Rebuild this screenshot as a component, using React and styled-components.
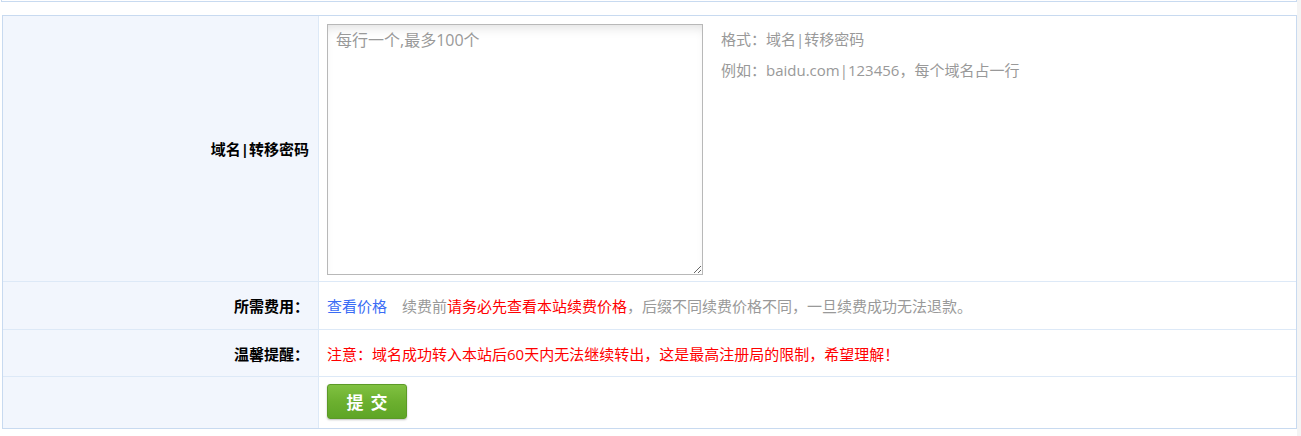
import React from 'react';
import styled, { createGlobalStyle } from 'styled-components';

const GlobalStyle = createGlobalStyle`
  html, body {
    margin: 0;
    padding: 0;
    background: #f4f4f4;
  }
  body {
    font-family: 'Open Sans', 'Noto Sans CJK SC', sans-serif;
  }
`;

const Page = styled.div`
  width: 1297px;
  height: 436px;
  background: #ffffff;
  overflow: hidden;
`;

const TopBox = styled.div`
  margin-left: 1px;
  width: 1294px;
  height: 1px;
  border: 1px solid #c8daf0;
  border-top: none;
`;

const FormTable = styled.div`
  margin: 13px 0 0 2px;
  width: 1293px;
  border: 1px solid #c8daf0;
`;

const Row = styled.div`
  display: grid;
  grid-template-columns: 316px 1fr;
  min-height: ${props => props.h}px;
  border-top: ${props => (props.first ? 'none' : '1px solid #dde9f7')};
`;

const Label = styled.div`
  display: flex;
  align-items: center;
  justify-content: flex-end;
  padding-right: 9px;
  background: #f2f6fd;
  border-right: 1px solid #dde9f7;
  font-size: 15px;
  font-weight: bold;
  color: #000;
`;

const Value = styled.div`
  display: flex;
  align-items: ${props => (props.top ? 'flex-start' : 'center')};
  padding: ${props => props.pad || '0 0 0 8px'};
  font-size: 15px;
  color: #999;
`;

const Area = styled.textarea`
  box-sizing: border-box;
  width: 376px;
  height: 251px;
  margin: 0;
  padding: 5px 8px;
  border: 1px solid #b8b8b8;
  box-shadow: inset 0 8px 12px -6px rgba(0, 0, 0, 0.14);
  font-family: 'Open Sans', 'Noto Sans CJK SC', sans-serif;
  font-size: 16px;
  line-height: 20px;
  color: #333;
  resize: both;
  outline: none;

  &::placeholder {
    color: #999;
  }
`;

const Hints = styled.div`
  margin-left: 18px;
  line-height: 31px;
  font-size: 15px;
  color: #999;
`;

const Link = styled.a`
  color: #3a6cf5;
  text-decoration: none;
  cursor: pointer;
`;

const Note = styled.span`
  margin-left: ${props => props.gap || 0}px;
  color: ${props => props.color || '#999'};
`;

const SubmitButton = styled.button`
  width: 80px;
  height: 35px;
  border: 1px solid #5c9a27;
  border-radius: 3px;
  background: linear-gradient(to bottom, #80c141 0%, #6cb02f 50%, #5ea526 100%);
  box-shadow: 0 1px 2px rgba(0, 0, 0, 0.25);
  color: #fff;
  font-family: 'Noto Sans CJK SC', sans-serif;
  font-size: 17px;
  font-weight: bold;
  letter-spacing: 7px;
  padding: 0 0 0 7px;
  cursor: pointer;
`;

export default function App() {
  return (
    <Page>
      <GlobalStyle />
      <TopBox />
      <FormTable>
        <Row first h={265}>
          <Label>域名|转移密码</Label>
          <Value top pad="8px 0 6px 8px">
            <Area placeholder="每行一个,最多100个" />
            <Hints>
              <div>格式：域名|转移密码</div>
              <div>例如：baidu.com|123456，每个域名占一行</div>
            </Hints>
          </Value>
        </Row>
        <Row h={47}>
          <Label>所需费用：</Label>
          <Value>
            <Link>查看价格</Link>
            <Note gap={15}>续费前</Note>
            <Note color="#ff0000">请务必先查看本站续费价格</Note>
            <Note>，后缀不同续费价格不同，一旦续费成功无法退款。</Note>
          </Value>
        </Row>
        <Row h={46}>
          <Label>温馨提醒：</Label>
          <Value>
            <Note color="#ff0000">注意：域名成功转入本站后60天内无法继续转出，这是最高注册局的限制，希望理解！</Note>
          </Value>
        </Row>
        <Row h={51}>
          <Label />
          <Value top pad="7px 0 8px 8px">
            <SubmitButton>提交</SubmitButton>
          </Value>
        </Row>
      </FormTable>
    </Page>
  );
}
